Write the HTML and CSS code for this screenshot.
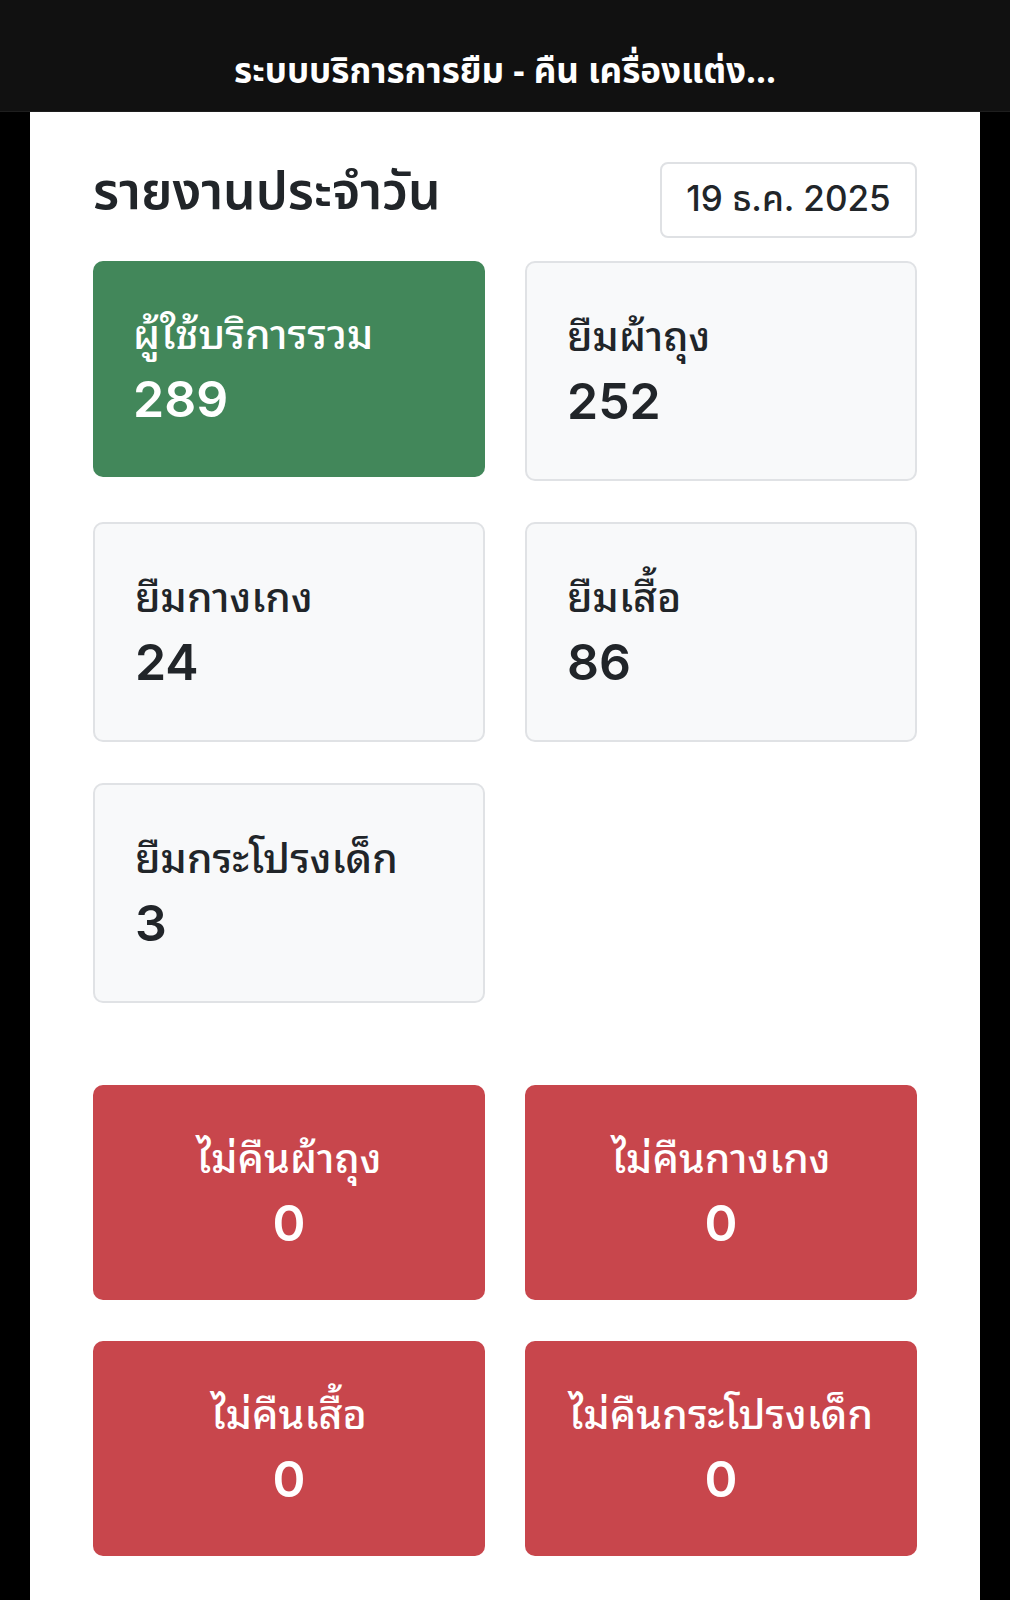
FILE: index.html
```html
<!DOCTYPE html>
<html lang="th">
<head>
<meta charset="utf-8">
<title>รายงานประจำวัน</title>
<link rel="stylesheet" href="styles.css">
</head>
<body>
<header class="topbar">
  <div class="topbar-title">ระบบบริการการยืม - คืน เครื่องแต่ง...</div>
</header>
<main class="panel">
  <div class="head-row">
    <h1 class="page-title">รายงานประจำวัน</h1>
    <div class="date-box">19 ธ.ค. 2025</div>
  </div>
  <section class="grid">
    <div class="card card-green">
      <div class="card-label">ผู้ใช้บริการรวม</div>
      <div class="card-num">289</div>
    </div>
    <div class="card card-gray">
      <div class="card-label">ยืมผ้าถุง</div>
      <div class="card-num">252</div>
    </div>
    <div class="card card-gray">
      <div class="card-label">ยืมกางเกง</div>
      <div class="card-num">24</div>
    </div>
    <div class="card card-gray">
      <div class="card-label">ยืมเสื้อ</div>
      <div class="card-num">86</div>
    </div>
    <div class="card card-gray">
      <div class="card-label">ยืมกระโปรงเด็ก</div>
      <div class="card-num">3</div>
    </div>
  </section>
  <section class="grid grid-red">
    <div class="card card-red">
      <div class="card-label">ไม่คืนผ้าถุง</div>
      <div class="card-num">0</div>
    </div>
    <div class="card card-red">
      <div class="card-label">ไม่คืนกางเกง</div>
      <div class="card-num">0</div>
    </div>
    <div class="card card-red">
      <div class="card-label">ไม่คืนเสื้อ</div>
      <div class="card-num">0</div>
    </div>
    <div class="card card-red">
      <div class="card-label">ไม่คืนกระโปรงเด็ก</div>
      <div class="card-num">0</div>
    </div>
  </section>
</main>
</body>
</html>
```
FILE: styles.css
```css
html, body {
  margin: 0;
  padding: 0;
  background: #000;
}
body {
  font-family: "Noto Sans Thai Looped", "Noto Sans", sans-serif;
  color: #212529;
}
.topbar {
  height: 112px;
  background: #111111;
  display: flex;
  align-items: center;
  justify-content: center;
  box-sizing: border-box;
  border-bottom: 1px solid #1e1e1e;
}
.topbar-title {
  font-family: "Noto Sans Thai", "Noto Sans", sans-serif;
  color: #fff;
  font-weight: 700;
  font-size: 35px;
  padding-top: 34px;
}
.panel {
  margin: 0 30px;
  background: #fff;
  min-height: 1488px;
  padding: 50px 63px 40px 63px;
  box-sizing: border-box;
}
.head-row {
  display: flex;
  justify-content: space-between;
  align-items: flex-start;
}
.page-title {
  margin: 0;
  font-family: "Noto Sans Thai", "Noto Sans", sans-serif;
  font-size: 51.5px;
  font-weight: 600;
  line-height: 62px;
  color: #212529;
}
.date-box {
  width: 257px;
  height: 76px;
  box-sizing: border-box;
  border: 2px solid #dfe1e4;
  border-radius: 8px;
  display: flex;
  align-items: center;
  justify-content: center;
  font-family: "Inter", "Noto Sans Thai", sans-serif;
  font-size: 35px;
  font-weight: 500;
}
.grid {
  display: grid;
  grid-template-columns: 392px 392px;
  column-gap: 40px;
  row-gap: 41px;
  margin-top: 23px;
  align-items: start;
}
.grid-red {
  margin-top: 82px;
}
.card {
  border-radius: 10px;
  padding: 40px 40px 48px 40px;
  box-sizing: border-box;
}
.card-green {
  background: #42875a;
  color: #fff;
}
.card-gray {
  background: #f8f9fa;
  border: 2px solid #e0e2e5;
}
.card-red {
  background: #c8464c;
  color: #fff;
  text-align: center;
  padding-bottom: 47px;
}
.card-label {
  font-family: "Noto Sans Thai Looped", "Noto Sans", sans-serif;
  font-size: 41px;
  line-height: 60px;
  font-weight: 500;
}
.card-num {
  font-family: "Inter", "Noto Sans", sans-serif;
  font-size: 50px;
  line-height: 60px;
  font-weight: 600;
  margin-top: 8px;
}
```
